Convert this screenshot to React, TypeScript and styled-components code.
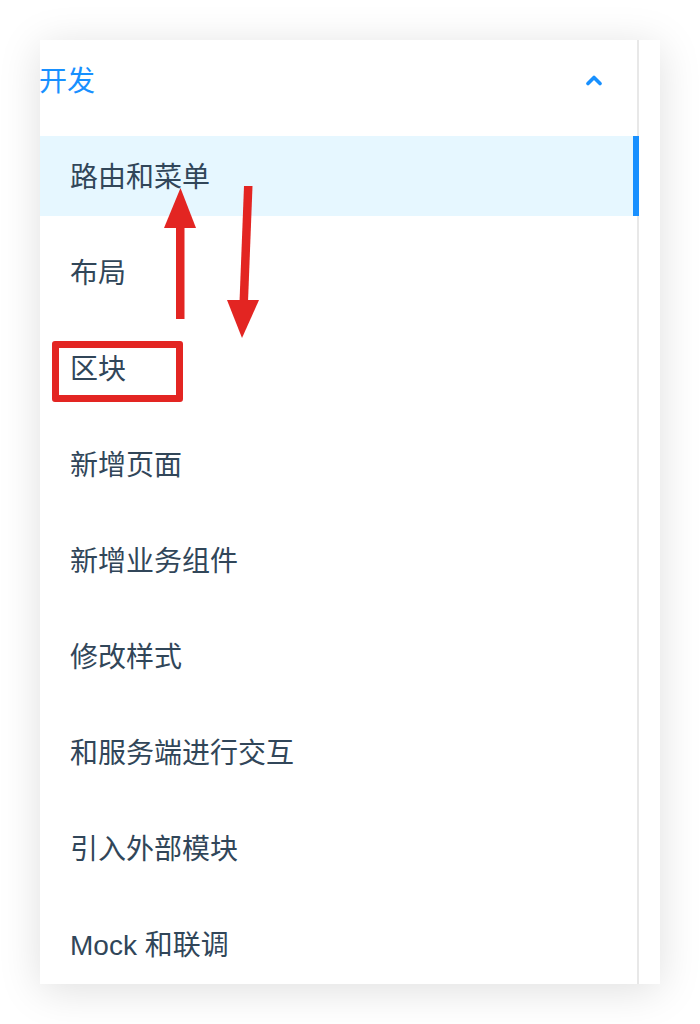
import styled, { createGlobalStyle } from 'styled-components';

const GlobalStyle = createGlobalStyle`
  html, body {
    margin: 0;
    padding: 0;
    background: #ffffff;
  }
  body {
    font-family: 'Liberation Sans', 'Noto Sans CJK SC', sans-serif;
  }
`;

const MENU_ITEMS = [
  '路由和菜单',
  '布局',
  '区块',
  '新增页面',
  '新增业务组件',
  '修改样式',
  '和服务端进行交互',
  '引入外部模块',
  'Mock 和联调',
];

const ChevronUp = () => (
  <svg width="16" height="12" viewBox="0 0 16 12">
    <polyline
      points="2,9.5 8,3.5 14,9.5"
      fill="none"
      stroke="#1890ff"
      strokeWidth="3.6"
      strokeLinecap="round"
      strokeLinejoin="round"
    />
  </svg>
);

const Annotations = () => (
  <Overlay>
    <svg width="700" height="1024" viewBox="0 0 700 1024">
      {/* up arrow */}
      <rect x="176" y="224" width="8.5" height="95" fill="#e32522" />
      <polygon points="164,228 196,228 180.5,188" fill="#e32522" />
      {/* down arrow */}
      <polygon points="244,186 252.5,186 248,302 239.5,302" fill="#e32522" />
      <polygon points="227,300 259,300 242,338" fill="#e32522" />
    </svg>
    <RedBox />
  </Overlay>
);

export default function App() {
  return (
    <>
      <GlobalStyle />
      <Page>
        <Card>
          <Menu>
            <Header>
              <span>开发</span>
              <ChevronUp />
            </Header>
            <List>
              {MENU_ITEMS.map((item, i) => (
                <Item key={item} $active={i === 0}>
                  {item}
                </Item>
              ))}
            </List>
          </Menu>
          <Gutter />
        </Card>
        <Annotations />
      </Page>
    </>
  );
}

const Page = styled.div`
  position: relative;
  width: 700px;
  height: 1024px;
  padding: 40px 0 0 40px;
  box-sizing: border-box;
`;

const Card = styled.div`
  display: flex;
  width: 620px;
  height: 944px;
  background: #ffffff;
  box-shadow: 0 6px 40px rgba(0, 0, 0, 0.13);
`;

const Menu = styled.div`
  display: flex;
  flex-direction: column;
  width: 597px;
  border-right: 2px solid #e8e8e8;
`;

const Gutter = styled.div`
  flex: 1;
`;

const Header = styled.div`
  display: flex;
  align-items: center;
  justify-content: space-between;
  height: 80px;
  padding-right: 35px;
  font-size: 28px;
  line-height: 28px;
  color: #1890ff;

  span {
    margin: 3px 0 0 -1px;
  }

  svg {
    margin-top: -1px;
  }
`;

const List = styled.ul`
  display: flex;
  flex-direction: column;
  gap: 16px;
  margin: 16px 0 0;
  padding: 0;
  list-style: none;
`;

const Item = styled.li<{ $active?: boolean }>`
  position: relative;
  display: flex;
  align-items: center;
  height: 80px;
  margin-right: -2px;
  padding: 0 0 2px 30px;
  box-sizing: border-box;
  font-size: 28px;
  color: #314659;
  background: ${p => (p.$active ? '#e6f7ff' : 'transparent')};

  &::after {
    content: '';
    position: absolute;
    top: 0;
    right: 0;
    bottom: 0;
    width: 6px;
    background: ${p => (p.$active ? '#1890ff' : 'transparent')};
  }
`;

const Overlay = styled.div`
  position: absolute;
  inset: 0;
  pointer-events: none;

  svg {
    position: absolute;
    top: 0;
    left: 0;
  }
`;

const RedBox = styled.div`
  position: absolute;
  left: 52px;
  top: 341px;
  width: 131px;
  height: 61px;
  box-sizing: border-box;
  border: 7.5px solid #e32522;
  border-radius: 3px;
`;
